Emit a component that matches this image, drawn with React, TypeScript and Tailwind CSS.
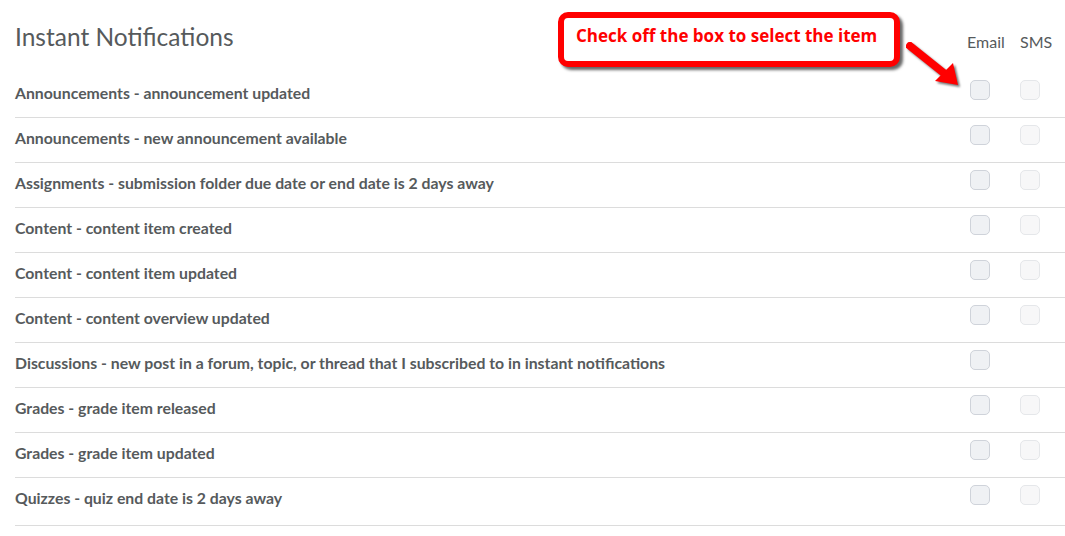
import React from 'react';

const items = [
  { label: 'Announcements - announcement updated', sms: true },
  { label: 'Announcements - new announcement available', sms: true },
  { label: 'Assignments - submission folder due date or end date is 2 days away', sms: true },
  { label: 'Content - content item created', sms: true },
  { label: 'Content - content item updated', sms: true },
  { label: 'Content - content overview updated', sms: true },
  { label: 'Discussions - new post in a forum, topic, or thread that I subscribed to in instant notifications', sms: false },
  { label: 'Grades - grade item released', sms: true },
  { label: 'Grades - grade item updated', sms: true },
  { label: 'Quizzes - quiz end date is 2 days away', sms: true },
];

function Box({ disabled }: { disabled?: boolean }) {
  return (
    <div
      className={
        disabled
          ? 'w-[20px] h-[20px] rounded-[5px] border border-[#e5e7ea] bg-[#f7f7f8]'
          : 'w-[20px] h-[20px] rounded-[5px] border border-[#cfd3da] bg-[#eff1f4]'
      }
    />
  );
}

export default function App() {
  return (
    <div className="relative w-[1065px] h-[536px] bg-white pl-[15px] text-[#565a5c] font-['Lato','Liberation_Sans',sans-serif]">
      {/* Header */}
      <div className="flex h-[73px]">
        <h1 className="flex-1 pt-[21px] text-[24.5px] leading-[32px] font-normal">Instant Notifications</h1>
        <div className="w-[50px] pt-[32px] pl-[2px] text-[16px] leading-[20px]">Email</div>
        <div className="w-[50px] pt-[32px] pl-[5px] text-[16px] leading-[20px]">SMS</div>
      </div>

      {/* Rows */}
      {items.map((item, i) => (
        <div
          key={item.label}
          className={
            i === items.length - 1
              ? 'flex h-[48px] border-b border-[#dcdcdc]'
              : 'flex h-[45px] border-b border-[#dcdcdc]'
          }
        >
          <div className="flex-1 pt-[10px] text-[15.8px] leading-[20px] font-bold">{item.label}</div>
          <div className="w-[50px] pt-[7px] pl-[5px]">
            <Box />
          </div>
          <div className="w-[50px] pt-[7px] pl-[5px]">{item.sms && <Box disabled />}</div>
        </div>
      ))}

      {/* Callout */}
      <div className="absolute left-[558px] top-[12px] w-[342px] h-[55px] rounded-[10px] border-[6px] border-[#ff0000] bg-white shadow-[3px_3px_3px_rgba(0,0,0,0.6)] flex items-start pl-[12px] pt-[6px]">
        <span className="font-['Open_Sans','Liberation_Sans',sans-serif] text-[17px] font-bold text-[#ff0000] leading-[24px]">
          Check off the box to select the item
        </span>
      </div>

      {/* Arrow */}
      <svg
        className="absolute left-[900px] top-[35px] drop-shadow-[2px_2px_1px_rgba(0,0,0,0.55)]"
        width="70"
        height="60"
        viewBox="900 35 70 60"
      >
        <line x1="910" y1="46" x2="945" y2="74" stroke="#ff0000" strokeWidth="8" strokeLinecap="round" />
        <polygon points="958,85 935,81 953,63" fill="#ff0000" />
      </svg>
    </div>
  );
}
